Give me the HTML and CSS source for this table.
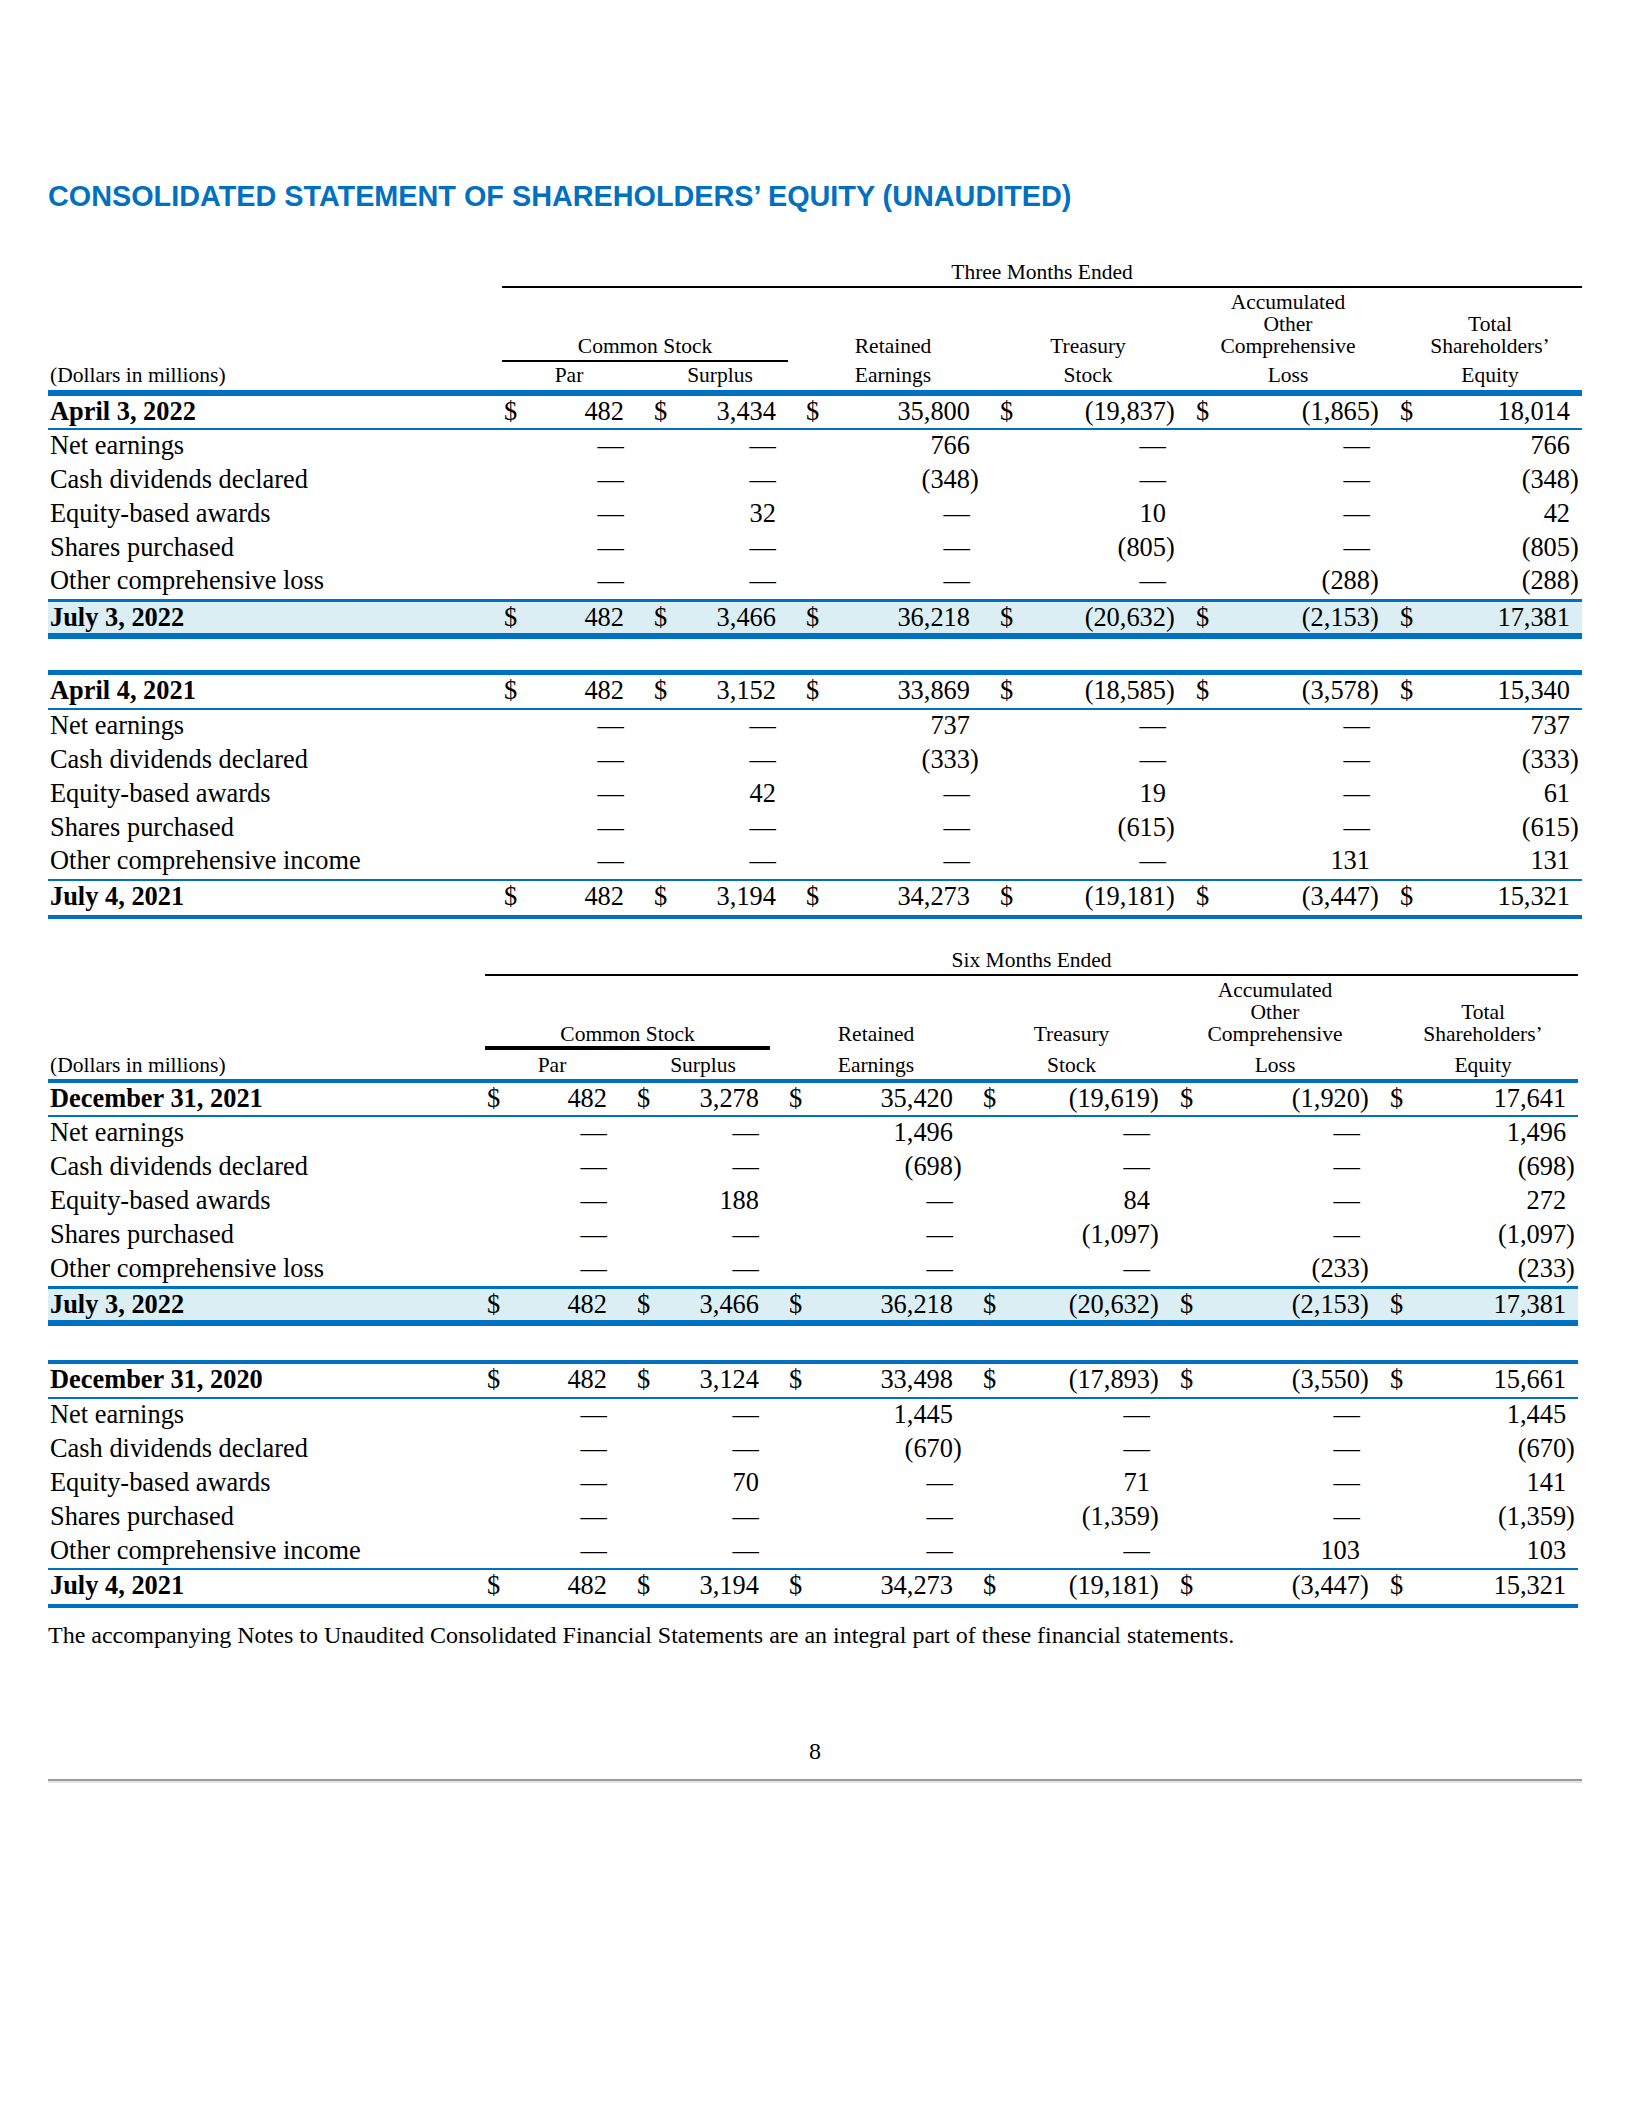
FILE: index.html
```html
<!DOCTYPE html>
<html lang="en">
<head>
<meta charset="utf-8">
<title>Consolidated Statement of Shareholders’ Equity (Unaudited)</title>
<link rel="stylesheet" href="styles.css">
</head>
<body>
<main class="page">
<h1 class="title">CONSOLIDATED STATEMENT OF SHAREHOLDERS’ EQUITY (UNAUDITED)</h1>

<table class="stmt stmt-q">
<colgroup>
<col class="c-label"><col class="c-d"><col class="c-n1"><col class="c-d"><col class="c-n2"><col class="c-d"><col class="c-n3"><col class="c-d"><col class="c-n4"><col class="c-d"><col class="c-n5"><col class="c-d"><col class="c-n6">
</colgroup>
<thead>
<tr class="h-period"><th></th><th colspan="12" class="period">Three Months Ended</th></tr>
<tr class="h-group">
<th></th>
<th colspan="4" class="grp"><div class="grp-line">Common Stock</div></th>
<th colspan="2" class="col-h">Retained</th>
<th colspan="2" class="col-h">Treasury</th>
<th colspan="2" class="col-h">Accumulated<br>Other<br>Comprehensive</th>
<th colspan="2" class="col-h last">Total<br>Shareholders’</th>
</tr>
<tr class="h-sub">
<th class="unit">(Dollars in millions)</th>
<th colspan="2" class="col-h">Par</th>
<th colspan="2" class="col-h">Surplus</th>
<th colspan="2" class="col-h">Earnings</th>
<th colspan="2" class="col-h">Stock</th>
<th colspan="2" class="col-h">Loss</th>
<th colspan="2" class="col-h last">Equity</th>
</tr>
</thead>
<tbody>
<tr class="open"><td class="lbl bold">April 3, 2022</td><td class="d">$</td><td class="n">482</td><td class="d">$</td><td class="n">3,434</td><td class="d">$</td><td class="n">35,800</td><td class="d">$</td><td class="n"><span class="neg">(19,837)</span></td><td class="d">$</td><td class="n"><span class="neg">(1,865)</span></td><td class="d">$</td><td class="n nl">18,014</td></tr>
<tr class="row"><td class="lbl">Net earnings</td><td class="d"></td><td class="n">—</td><td class="d"></td><td class="n">—</td><td class="d"></td><td class="n">766</td><td class="d"></td><td class="n">—</td><td class="d"></td><td class="n">—</td><td class="d"></td><td class="n nl">766</td></tr>
<tr class="row"><td class="lbl">Cash dividends declared</td><td class="d"></td><td class="n">—</td><td class="d"></td><td class="n">—</td><td class="d"></td><td class="n"><span class="neg">(348)</span></td><td class="d"></td><td class="n">—</td><td class="d"></td><td class="n">—</td><td class="d"></td><td class="n nl"><span class="neg">(348)</span></td></tr>
<tr class="row"><td class="lbl">Equity-based awards</td><td class="d"></td><td class="n">—</td><td class="d"></td><td class="n">32</td><td class="d"></td><td class="n">—</td><td class="d"></td><td class="n">10</td><td class="d"></td><td class="n">—</td><td class="d"></td><td class="n nl">42</td></tr>
<tr class="row"><td class="lbl">Shares purchased</td><td class="d"></td><td class="n">—</td><td class="d"></td><td class="n">—</td><td class="d"></td><td class="n">—</td><td class="d"></td><td class="n"><span class="neg">(805)</span></td><td class="d"></td><td class="n">—</td><td class="d"></td><td class="n nl"><span class="neg">(805)</span></td></tr>
<tr class="row pre-hl"><td class="lbl">Other comprehensive loss</td><td class="d"></td><td class="n">—</td><td class="d"></td><td class="n">—</td><td class="d"></td><td class="n">—</td><td class="d"></td><td class="n">—</td><td class="d"></td><td class="n"><span class="neg">(288)</span></td><td class="d"></td><td class="n nl"><span class="neg">(288)</span></td></tr>
<tr class="close-hl"><td class="lbl bold">July 3, 2022</td><td class="d">$</td><td class="n">482</td><td class="d">$</td><td class="n">3,466</td><td class="d">$</td><td class="n">36,218</td><td class="d">$</td><td class="n"><span class="neg">(20,632)</span></td><td class="d">$</td><td class="n"><span class="neg">(2,153)</span></td><td class="d">$</td><td class="n nl">17,381</td></tr>
<tr class="gap"><td colspan="13"></td></tr>
</tbody>
<tbody>
<tr class="open top-bar"><td class="lbl bold">April 4, 2021</td><td class="d">$</td><td class="n">482</td><td class="d">$</td><td class="n">3,152</td><td class="d">$</td><td class="n">33,869</td><td class="d">$</td><td class="n"><span class="neg">(18,585)</span></td><td class="d">$</td><td class="n"><span class="neg">(3,578)</span></td><td class="d">$</td><td class="n nl">15,340</td></tr>
<tr class="row"><td class="lbl">Net earnings</td><td class="d"></td><td class="n">—</td><td class="d"></td><td class="n">—</td><td class="d"></td><td class="n">737</td><td class="d"></td><td class="n">—</td><td class="d"></td><td class="n">—</td><td class="d"></td><td class="n nl">737</td></tr>
<tr class="row"><td class="lbl">Cash dividends declared</td><td class="d"></td><td class="n">—</td><td class="d"></td><td class="n">—</td><td class="d"></td><td class="n"><span class="neg">(333)</span></td><td class="d"></td><td class="n">—</td><td class="d"></td><td class="n">—</td><td class="d"></td><td class="n nl"><span class="neg">(333)</span></td></tr>
<tr class="row"><td class="lbl">Equity-based awards</td><td class="d"></td><td class="n">—</td><td class="d"></td><td class="n">42</td><td class="d"></td><td class="n">—</td><td class="d"></td><td class="n">19</td><td class="d"></td><td class="n">—</td><td class="d"></td><td class="n nl">61</td></tr>
<tr class="row"><td class="lbl">Shares purchased</td><td class="d"></td><td class="n">—</td><td class="d"></td><td class="n">—</td><td class="d"></td><td class="n">—</td><td class="d"></td><td class="n"><span class="neg">(615)</span></td><td class="d"></td><td class="n">—</td><td class="d"></td><td class="n nl"><span class="neg">(615)</span></td></tr>
<tr class="row pre"><td class="lbl">Other comprehensive income</td><td class="d"></td><td class="n">—</td><td class="d"></td><td class="n">—</td><td class="d"></td><td class="n">—</td><td class="d"></td><td class="n">—</td><td class="d"></td><td class="n">131</td><td class="d"></td><td class="n nl">131</td></tr>
<tr class="close"><td class="lbl bold">July 4, 2021</td><td class="d">$</td><td class="n">482</td><td class="d">$</td><td class="n">3,194</td><td class="d">$</td><td class="n">34,273</td><td class="d">$</td><td class="n"><span class="neg">(19,181)</span></td><td class="d">$</td><td class="n"><span class="neg">(3,447)</span></td><td class="d">$</td><td class="n nl">15,321</td></tr>
</tbody>
</table>

<table class="stmt stmt-h">
<colgroup>
<col class="c-label"><col class="c-d"><col class="c-n1"><col class="c-d"><col class="c-n2"><col class="c-d"><col class="c-n3"><col class="c-d"><col class="c-n4"><col class="c-d"><col class="c-n5"><col class="c-d"><col class="c-n6">
</colgroup>
<thead>
<tr class="h-period"><th></th><th colspan="12" class="period">Six Months Ended</th></tr>
<tr class="h-group">
<th></th>
<th colspan="4" class="grp"><div class="grp-line">Common Stock</div></th>
<th colspan="2" class="col-h">Retained</th>
<th colspan="2" class="col-h">Treasury</th>
<th colspan="2" class="col-h">Accumulated<br>Other<br>Comprehensive</th>
<th colspan="2" class="col-h last">Total<br>Shareholders’</th>
</tr>
<tr class="h-sub">
<th class="unit">(Dollars in millions)</th>
<th colspan="2" class="col-h">Par</th>
<th colspan="2" class="col-h">Surplus</th>
<th colspan="2" class="col-h">Earnings</th>
<th colspan="2" class="col-h">Stock</th>
<th colspan="2" class="col-h">Loss</th>
<th colspan="2" class="col-h last">Equity</th>
</tr>
</thead>
<tbody>
<tr class="open"><td class="lbl bold">December 31, 2021</td><td class="d">$</td><td class="n">482</td><td class="d">$</td><td class="n">3,278</td><td class="d">$</td><td class="n">35,420</td><td class="d">$</td><td class="n"><span class="neg">(19,619)</span></td><td class="d">$</td><td class="n"><span class="neg">(1,920)</span></td><td class="d">$</td><td class="n nl">17,641</td></tr>
<tr class="row"><td class="lbl">Net earnings</td><td class="d"></td><td class="n">—</td><td class="d"></td><td class="n">—</td><td class="d"></td><td class="n">1,496</td><td class="d"></td><td class="n">—</td><td class="d"></td><td class="n">—</td><td class="d"></td><td class="n nl">1,496</td></tr>
<tr class="row"><td class="lbl">Cash dividends declared</td><td class="d"></td><td class="n">—</td><td class="d"></td><td class="n">—</td><td class="d"></td><td class="n"><span class="neg">(698)</span></td><td class="d"></td><td class="n">—</td><td class="d"></td><td class="n">—</td><td class="d"></td><td class="n nl"><span class="neg">(698)</span></td></tr>
<tr class="row"><td class="lbl">Equity-based awards</td><td class="d"></td><td class="n">—</td><td class="d"></td><td class="n">188</td><td class="d"></td><td class="n">—</td><td class="d"></td><td class="n">84</td><td class="d"></td><td class="n">—</td><td class="d"></td><td class="n nl">272</td></tr>
<tr class="row"><td class="lbl">Shares purchased</td><td class="d"></td><td class="n">—</td><td class="d"></td><td class="n">—</td><td class="d"></td><td class="n">—</td><td class="d"></td><td class="n"><span class="neg">(1,097)</span></td><td class="d"></td><td class="n">—</td><td class="d"></td><td class="n nl"><span class="neg">(1,097)</span></td></tr>
<tr class="row pre-hl"><td class="lbl">Other comprehensive loss</td><td class="d"></td><td class="n">—</td><td class="d"></td><td class="n">—</td><td class="d"></td><td class="n">—</td><td class="d"></td><td class="n">—</td><td class="d"></td><td class="n"><span class="neg">(233)</span></td><td class="d"></td><td class="n nl"><span class="neg">(233)</span></td></tr>
<tr class="close-hl"><td class="lbl bold">July 3, 2022</td><td class="d">$</td><td class="n">482</td><td class="d">$</td><td class="n">3,466</td><td class="d">$</td><td class="n">36,218</td><td class="d">$</td><td class="n"><span class="neg">(20,632)</span></td><td class="d">$</td><td class="n"><span class="neg">(2,153)</span></td><td class="d">$</td><td class="n nl">17,381</td></tr>
<tr class="gap"><td colspan="13"></td></tr>
</tbody>
<tbody>
<tr class="open top-bar"><td class="lbl bold">December 31, 2020</td><td class="d">$</td><td class="n">482</td><td class="d">$</td><td class="n">3,124</td><td class="d">$</td><td class="n">33,498</td><td class="d">$</td><td class="n"><span class="neg">(17,893)</span></td><td class="d">$</td><td class="n"><span class="neg">(3,550)</span></td><td class="d">$</td><td class="n nl">15,661</td></tr>
<tr class="row"><td class="lbl">Net earnings</td><td class="d"></td><td class="n">—</td><td class="d"></td><td class="n">—</td><td class="d"></td><td class="n">1,445</td><td class="d"></td><td class="n">—</td><td class="d"></td><td class="n">—</td><td class="d"></td><td class="n nl">1,445</td></tr>
<tr class="row"><td class="lbl">Cash dividends declared</td><td class="d"></td><td class="n">—</td><td class="d"></td><td class="n">—</td><td class="d"></td><td class="n"><span class="neg">(670)</span></td><td class="d"></td><td class="n">—</td><td class="d"></td><td class="n">—</td><td class="d"></td><td class="n nl"><span class="neg">(670)</span></td></tr>
<tr class="row"><td class="lbl">Equity-based awards</td><td class="d"></td><td class="n">—</td><td class="d"></td><td class="n">70</td><td class="d"></td><td class="n">—</td><td class="d"></td><td class="n">71</td><td class="d"></td><td class="n">—</td><td class="d"></td><td class="n nl">141</td></tr>
<tr class="row"><td class="lbl">Shares purchased</td><td class="d"></td><td class="n">—</td><td class="d"></td><td class="n">—</td><td class="d"></td><td class="n">—</td><td class="d"></td><td class="n"><span class="neg">(1,359)</span></td><td class="d"></td><td class="n">—</td><td class="d"></td><td class="n nl"><span class="neg">(1,359)</span></td></tr>
<tr class="row pre"><td class="lbl">Other comprehensive income</td><td class="d"></td><td class="n">—</td><td class="d"></td><td class="n">—</td><td class="d"></td><td class="n">—</td><td class="d"></td><td class="n">—</td><td class="d"></td><td class="n">103</td><td class="d"></td><td class="n nl">103</td></tr>
<tr class="close"><td class="lbl bold">July 4, 2021</td><td class="d">$</td><td class="n">482</td><td class="d">$</td><td class="n">3,194</td><td class="d">$</td><td class="n">34,273</td><td class="d">$</td><td class="n"><span class="neg">(19,181)</span></td><td class="d">$</td><td class="n"><span class="neg">(3,447)</span></td><td class="d">$</td><td class="n nl">15,321</td></tr>
</tbody>
</table>

<p class="note">The accompanying Notes to Unaudited Consolidated Financial Statements are an integral part of these financial statements.</p>

<footer class="foot">
<div class="folio">8</div>
<div class="rule"></div>
</footer>
</main>
</body>
</html>
```

FILE: styles.css
```css
* { box-sizing: border-box; }
html, body { margin: 0; padding: 0; background: #fff; }
body {
  font-family: "Liberation Serif", "Times New Roman", serif;
  color: #000;
}
.page {
  width: 1631px;
  min-height: 2111px;
  padding: 179.5px 49px 0 48px;
}
.title {
  margin: 0 0 48.2px;
  font-family: "Liberation Sans", Arial, sans-serif;
  font-weight: bold;
  font-size: 28.8px;
  line-height: 33px;
  color: #0070c0;
}

/* tables */
.stmt {
  border-collapse: separate;
  border-spacing: 0;
  table-layout: fixed;
}
.stmt-q { width: 1534px; }
.stmt-h { width: 1530px; margin-top: 29.5px; }

.stmt .c-d { width: 16px; }
.stmt-q .c-label { width: 454px; }
.stmt-q .c-n1 { width: 134px; }
.stmt-q .c-n2 { width: 136px; }
.stmt-q .c-n3 { width: 178px; }
.stmt-q .c-n4 { width: 180px; }
.stmt-q .c-n5 { width: 188px; }
.stmt-q .c-n6 { width: 168px; }
.stmt-h .c-label { width: 437px; }
.stmt-h .c-n1 { width: 134px; }
.stmt-h .c-n2 { width: 136px; }
.stmt-h .c-n3 { width: 178px; }
.stmt-h .c-n4 { width: 181px; }
.stmt-h .c-n5 { width: 194px; }
.stmt-h .c-n6 { width: 174px; }

.stmt th, .stmt td {
  padding: 0;
  font-weight: normal;
  white-space: nowrap;
}

/* header */
.stmt thead th {
  font-size: 21.5px;
  line-height: 22px;
  text-align: center;
  vertical-align: bottom;
}
.stmt .period {
  padding-bottom: 3.5px;
  border-bottom: 2px solid #000;
}
.stmt .h-group th {
  padding-top: 3px;
  padding-bottom: 5px;
}
.stmt .h-group .grp {
  padding-right: 16px;
  padding-bottom: 0;
}
.grp-line {
  padding-bottom: 3px;
  border-bottom: 2px solid #000;
}
.stmt .col-h { padding-right: 16px; }
.stmt .col-h.last { padding-right: 0; }
.stmt .h-sub th {
  padding-top: 2.2px;
  padding-bottom: 3.6px;
  border-bottom: 6px solid #0070c0;
}
.stmt .h-sub .unit {
  text-align: left;
  padding-left: 2px;
}

/* six-month header is slightly tighter */
.stmt-h .h-group th { padding-top: 2.7px; }
.stmt-h .h-group .grp { padding-right: 17px; }
.stmt-h .grp-line {
  padding-bottom: 1px;
  border-bottom-width: 4px;
}
.stmt-h .h-sub th {
  padding-top: 3.7px;
  border-bottom-width: 4px;
}

/* body */
.stmt tbody td {
  font-size: 26.4px;
  line-height: 31px;
  vertical-align: top;
}
.stmt .lbl { text-align: left; padding-left: 2px; }
.stmt .bold { font-weight: bold; }
.stmt .d { text-align: left; padding-left: 2px; }
.stmt .n { text-align: right; padding-right: 28px; }
.stmt .n.nl { padding-right: 12px; }
.neg { margin-right: -0.333em; }

.stmt .row td { padding-bottom: 2.8px; }
.stmt .open td {
  padding-bottom: 1.3px;
  border-bottom: 2px solid #0070c0;
}
.stmt .open.top-bar td {
  padding-bottom: 2.4px;
  border-top: 5px solid #0070c0;
}
.stmt-h .open.top-bar td { border-top-width: 4px; }
.stmt-h .open td { padding-bottom: 1.3px; }

.stmt .pre td { border-bottom: 2px solid #0070c0; }
.stmt .pre-hl td { border-bottom: 3px solid #0070c0; }
.stmt .close-hl td {
  background: #daeef3;
  border-bottom: 6px solid #0070c0;
}
.stmt .close td {
  padding-bottom: 3px;
  border-bottom: 4px solid #0070c0;
}
.stmt .gap td { height: 30.6px; line-height: 0; }
.stmt-h .gap td { height: 33.5px; }

/* footer */
.note {
  margin: 13.5px 0 0;
  font-size: 24px;
  line-height: 26px;
  white-space: nowrap;
}
.foot { width: 1534px; }
.folio {
  margin-top: 90px;
  text-align: center;
  font-size: 24px;
  line-height: 26px;
}
.rule {
  margin-top: 14.7px;
  height: 4px;
  border-top: 2px solid #9a9a9a;
  background: #e4e4e4;
}
```
